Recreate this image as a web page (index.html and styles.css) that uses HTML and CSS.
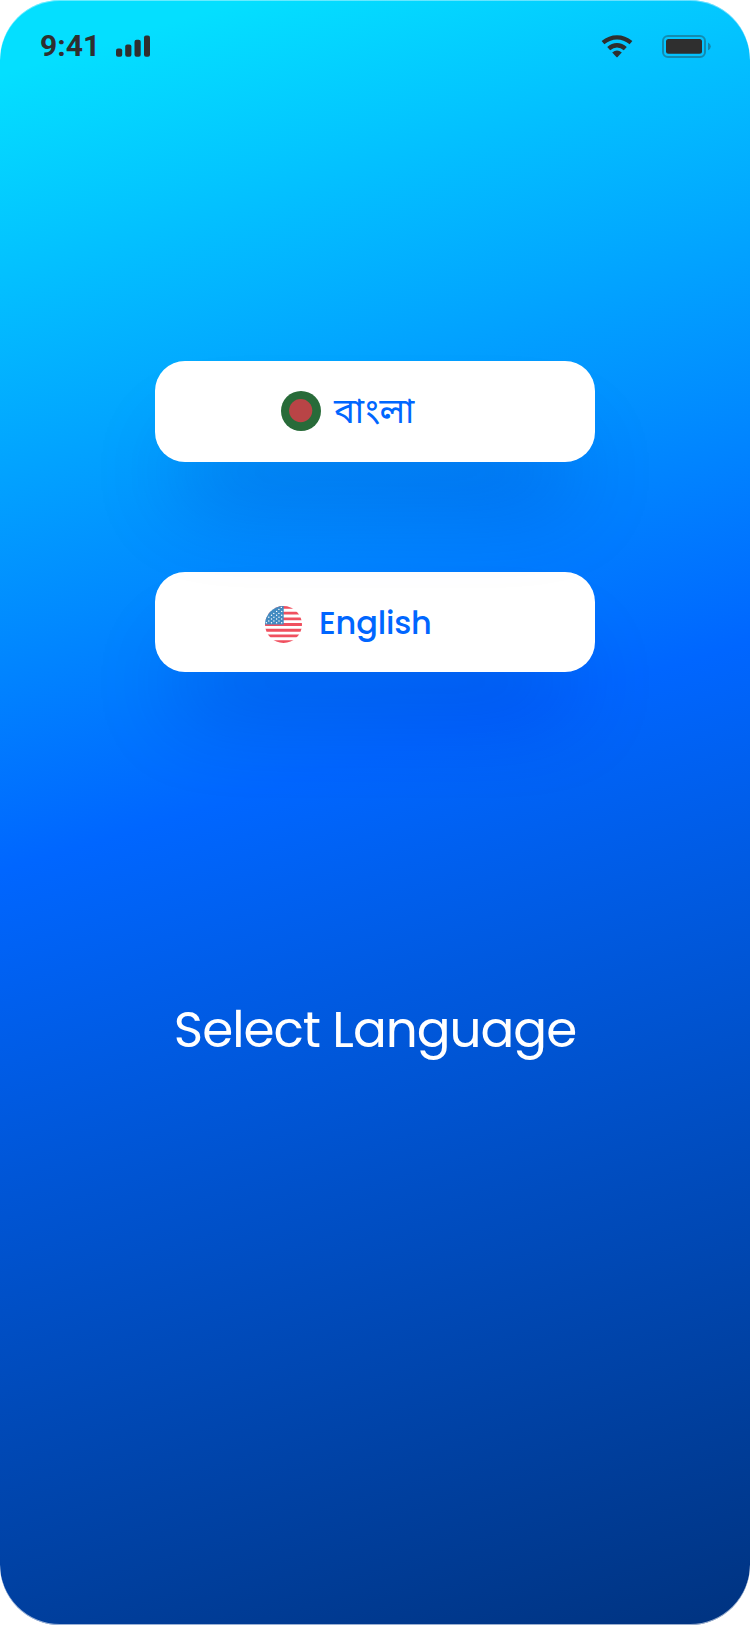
FILE: index.html
```html
<!DOCTYPE html>
<html lang="en">
<head>
<meta charset="utf-8">
<title>Select Language</title>
<link rel="stylesheet" href="styles.css">
</head>
<body>
<main class="screen">
  <header class="status">
    <span class="time">9:41</span>
    <svg class="signal" width="34" height="22" viewBox="0 0 34 22" fill="#2f2f2f"><rect y="13.5" width="6.2" height="8.2" rx="2"/><rect x="9.2" y="9.5" width="6.2" height="12.2" rx="2"/><rect x="18.5" y="4.7" width="6.2" height="17" rx="2"/><rect x="28" y=".5" width="6" height="21.2" rx="2"/></svg>
    <svg class="wifi" width="32" height="24" viewBox="0 0 32 24" fill="none" stroke="#2f2f2f" stroke-width="4.4"><path d="M2 7.6Q8.5 2.4 16 2.4T30 7.6"/><path d="M7.7 13.7Q11.5 10.2 16 10.2T24.3 13.7"/><path d="M11.2 17.6Q16 13.4 20.8 17.6L16.6 22Q16 22.5 15.4 22Z" fill="#2f2f2f" stroke="none"/></svg>
    <svg class="battery" width="50" height="24" viewBox="0 0 50 24"><rect x="1" y="1" width="42" height="21" rx="5" fill="none" stroke="#2f2f2f" stroke-opacity=".38" stroke-width="2"/><rect x="4" y="4" width="36" height="14.8" rx="2.5" fill="#2f2f2f"/><path d="M46 7.5Q48.8 9 48.8 11.4T46 15.3Z" fill="#2f2f2f" opacity=".4"/></svg>
  </header>
  <div class="choices">
    <button class="choice choice-bn" type="button">
      <svg width="40" height="40" viewBox="0 0 40 40"><circle cx="20" cy="20" r="20" fill="#286b39"/><circle cx="19.7" cy="19.6" r="11.6" fill="#b94446"/></svg>
      <span class="bangla" lang="bn">বাংলা</span>
    </button>
    <button class="choice choice-en" type="button">
      <svg width="37" height="37" viewBox="0 0 37 37">
        <defs><clipPath id="round"><circle cx="18.5" cy="18.5" r="18.5"/></clipPath></defs>
        <g clip-path="url(#round)">
          <path fill="#fff" d="M0 0h37v37H0z"/>
          <path stroke="#f0505f" stroke-width="2.85" d="M0 1.4h37M0 7.1h37M0 12.8h37M0 18.5h37M0 24.2h37M0 29.9h37M0 35.6h37"/>
          <path fill="#428bc1" d="M0 0h18.7v18.5H0z"/>
          <g stroke="#fff" stroke-width="1.4" stroke-linecap="round" stroke-dasharray="0 5.1"><path d="M16.3 1.4h1M11.6 5.4h6M6.5 9.3h11M6.5 13h11M1.4 16.8h16"/><path d="M13.9 3.4h2M8.8 7.4h7M3.8 11.2h13M3.8 15h13"/></g>
        </g>
      </svg>
      <span class="english">English</span>
    </button>
  </div>
  <h1 class="title">Select Language</h1>
</main>
</body>
</html>
```
FILE: styles.css
```css
* { box-sizing: border-box; }
body { margin: 0; background: #fff; }
.screen {
  display: flex;
  flex-direction: column;
  align-items: center;
  width: 750px;
  height: 1625px;
  border-radius: 60px;
  overflow: hidden;
  background: linear-gradient(163deg, #04dfff 4%, #06f 47%, #003380 100%);
  box-shadow: inset 0 1px rgba(255,255,255,.4), inset 0 -1px rgba(255,255,255,.6);
  font-family: Poppins, Inter, "Noto Sans Bengali", sans-serif;
}
.status {
  display: flex;
  align-items: flex-start;
  width: 100%;
  height: 361px;
  padding: 35px 38px 0 40px;
  color: #2f2f2f;
}
.time {
  width: 76px;
  font: 700 30px/22px Roboto, sans-serif;
}
.wifi { margin-left: auto; margin-right: 29px; }
.choices {
  display: flex;
  flex-direction: column;
  gap: 110px;
}
.choice {
  display: flex;
  align-items: center;
  width: 440px;
  height: 100.5px;
  padding: 0;
  border: 0;
  border-radius: 30px;
  background: #fff;
  color: #06f;
  font-family: inherit;
  box-shadow: 0 60px 90px -28px rgba(0, 0, 160, .33);
}
.choice-bn { position: relative; z-index: 1; padding-left: 126px; gap: 13px; }
.choice-en { padding: 5px 0 0 110px; gap: 17px; }
.bangla { font-size: 35px; line-height: 40px; white-space: nowrap; }
.english { padding-bottom: 3px; font-size: 32px; font-weight: 500; line-height: 40px; letter-spacing: -.2px; }
.title {
  margin: 328px 0 0;
  color: #fff;
  font-size: 50px;
  font-weight: 400;
  line-height: 60px;
  letter-spacing: -1px;
  white-space: nowrap;
}
```
